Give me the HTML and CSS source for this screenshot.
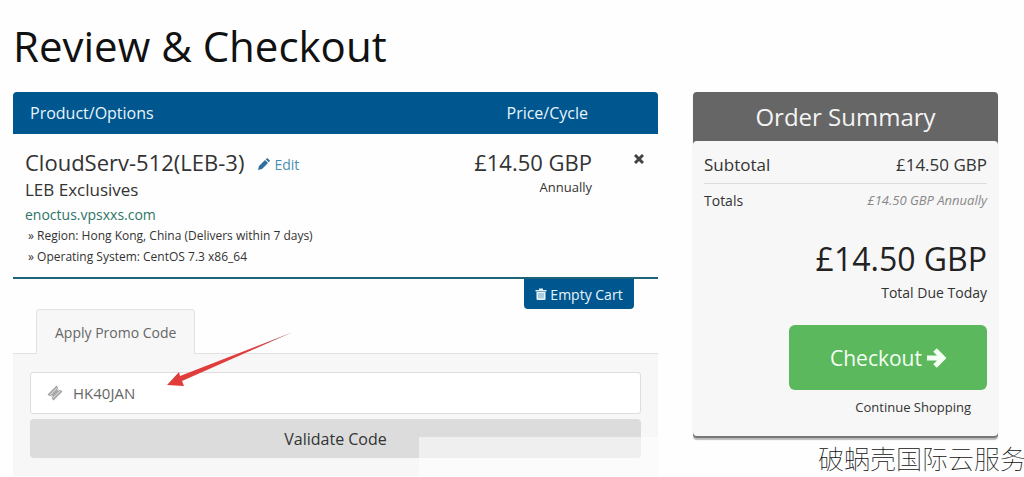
FILE: index.html
```html
<!DOCTYPE html>
<html lang="en">

<head>
    <meta charset="utf-8">
    <meta name="viewport" content="width=device-width, initial-scale=1.0">
    <title>Review &amp; Checkout</title>
    <link rel="stylesheet" href="styles.css">
</head>

<body>
    <h1>Review &amp; Checkout</h1>

    <div class="wrapper">
        <main>
            <div class="cart-header">
                <span>Product/Options</span>
                <span class="cart-header-price">Price/Cycle</span>
            </div>

            <section class="item">
                <div class="item-info">
                    <div class="item-title">
                        <h2>CloudServ-512(LEB-3)</h2>
                        <a class="edit" href="#">
                            <svg width="12" height="12" viewBox="0 0 12 12" aria-hidden="true">
                                <path fill="currentColor" d="M0 12l1-4 6-6 3 3-6 6zM7.700 1.300L8.600.4q.6-.5 1.200 0l1.800 1.800q.5.600 0 1.200l-.9.900z" />
                            </svg>
                            Edit
                        </a>
                    </div>
                    <p class="group">LEB Exclusives</p>
                    <p class="domain">enoctus.vpsxxs.com</p>
                    <ul class="options">
                        <li>» Region: Hong Kong, China (Delivers within 7 days)</li>
                        <li>» Operating System: CentOS 7.3 x86_64</li>
                    </ul>
                </div>
                <div class="item-price">
                    <p class="amount">£14.50 GBP</p>
                    <p class="cycle">Annually</p>
                </div>
                <button class="remove" type="button" aria-label="Remove">
                    <svg width="10" height="10" viewBox="0 0 10 10" aria-hidden="true">
                        <path stroke="currentColor" stroke-width="3" d="M1 1l8 8M9 1L1 9" />
                    </svg>
                </button>
            </section>

            <div class="empty">
                <button class="empty-cart" type="button">
                    <svg width="12" height="12" viewBox="0 0 12 12" aria-hidden="true">
                        <path fill="currentColor" d="M.5 2H4V.5h4V2h3.500v1.500H.5z" />
                        <path fill="currentColor" d="M1.500 4h9v7q0 1-1 1h-7q-1 0-1-1z" />
                        <path stroke="#00578f" stroke-width=".5" d="M4 5v5.500M6 5v5.500M8 5v5.500" />
                    </svg>
                    Empty Cart
                </button>
            </div>

            <div class="tabs">
                <button class="tab" type="button">Apply Promo Code</button>
            </div>
            <form class="promo">
                <div class="field">
                    <svg width="16" height="16" viewBox="0 0 16 16" aria-hidden="true">
                        <path fill="#aaa" d="M9.500.5L11 2q-.5 1.500.5 2.500t2.500.5l1.500 1.500-9 9L5 14q.5-1.500-.5-2.500T2 11L.5 9.500z" />
                        <path fill="none" stroke="#eee" stroke-width=".8" d="M9.500 3.500l3 3-6 6-3-3z" />
                    </svg>
                    <input type="text" name="code" value="HK40JAN" aria-label="Promo code">
                </div>
                <button class="validate" type="button">Validate Code</button>
                <svg class="arrow" width="126" height="54" viewBox="0 0 126 54" aria-hidden="true">
                    <defs>
                        <linearGradient id="fade" x1="0" x2="1">
                            <stop offset=".7" stop-color="#e03c3c" />
                            <stop offset="1" stop-color="#a87070" />
                        </linearGradient>
                    </defs>
                    <path fill="url(#fade)" d="M0 53l12-13 1 4L126 0 15 49l2 5z" />
                </svg>
            </form>
        </main>

        <aside>
            <h2>Order Summary</h2>
            <div class="summary">
                <div class="row subtotal">
                    <span>Subtotal</span>
                    <span>£14.50 GBP</span>
                </div>
                <div class="row totals">
                    <span>Totals</span>
                    <em>£14.50 GBP Annually</em>
                </div>
                <p class="due">£14.50 GBP</p>
                <p class="due-label">Total Due Today</p>
                <button class="checkout" type="button">
                    Checkout
                    <svg width="19" height="20" viewBox="0 0 19 20" aria-hidden="true">
                        <path fill="none" stroke="currentColor" stroke-width="5" d="M0 10h15M8 2l8 8-8 8" />
                    </svg>
                </button>
                <a class="continue" href="#">Continue Shopping</a>
            </div>
        </aside>
    </div>

    <div class="haze"></div>
    <p class="watermark">破蜗壳国际云服务</p>
</body>

</html>
```
FILE: styles.css
```css
* {
    box-sizing: border-box;
}

body {
    margin: 0;
    padding: 16px 26px 0 13px;
    background-color: #fefefe;
    color: #333;
    font-family: "Open Sans", sans-serif;
    font-size: 14px;
    overflow: hidden;
}

h1,
h2,
p,
ul {
    margin: 0;
    padding: 0;
    font-weight: 400;
}

h1 {
    color: #111;
    font-size: 42px;
    line-height: 60px;
    margin-bottom: 16px;
}

a {
    text-decoration: none;
}

button {
    border: 0;
    padding: 0;
    font-family: inherit;
    cursor: pointer;
}

.wrapper {
    display: grid;
    grid-template-columns: 645fr 305fr;
    grid-gap: 35px;
    align-items: start;
}

.cart-header {
    display: flex;
    justify-content: space-between;
    padding: 0 70px 0 17px;
    border-radius: 4px 4px 0 0;
    background-color: #00578f;
    color: #e8f4fb;
    font-size: 16px;
    line-height: 42px;
}

.item {
    display: flex;
    height: 145px;
    padding: 14px 14px 0 12px;
    border-bottom: 2px solid #1d6478;
}

.item-info {
    flex: 1;
}

.item-title {
    display: flex;
    align-items: center;
    gap: 14px;
}

.item-title h2,
.amount {
    font-size: 22px;
    line-height: 28px;
}

.edit {
    display: flex;
    align-items: center;
    gap: 4px;
    padding-top: 4px;
    color: #4a8fb8;
}

.edit svg {
    color: #2f6f9f;
}

.group {
    font-size: 17px;
    line-height: 28px;
}

.domain {
    color: #2f7468;
    line-height: 21px;
}

.options {
    padding-left: 3px;
    list-style: none;
    font-size: 12px;
    line-height: 21px;
}

.item-price {
    text-align: right;
}

.cycle {
    font-size: 13px;
    line-height: 22px;
}

.remove {
    align-self: flex-start;
    height: 22px;
    margin-left: 42px;
    background: none;
    color: #444;
}

.empty {
    display: flex;
    justify-content: flex-end;
    padding-right: 24px;
}

.empty-cart {
    display: flex;
    align-items: center;
    justify-content: center;
    gap: 3px;
    width: 110px;
    height: 30px;
    border-radius: 0 0 4px 4px;
    background-color: #00578f;
    color: #e8f4fb;
    font-size: 14px;
}

.tabs {
    padding-left: 23px;
}

.tab {
    display: block;
    position: relative;
    z-index: 1;
    height: 45px;
    margin-bottom: -1px;
    padding: 0 18px;
    border: 1px solid #e2e2e2;
    border-bottom: 0;
    border-radius: 4px 4px 0 0;
    background-color: #f7f7f7;
    color: #666;
    font-size: 14px;
}

.promo {
    position: relative;
    padding: 18px 17px;
    border-top: 1px solid #e2e2e2;
    background-color: #f7f7f7;
}

.field {
    display: flex;
    align-items: center;
    gap: 10px;
    height: 42px;
    padding-left: 16px;
    border: 1px solid #ddd;
    border-radius: 3px;
    background-color: #fff;
}

.field input {
    flex: 1;
    border: 0;
    padding: 0;
    background: none;
    color: #666;
    font-family: inherit;
    font-size: 15px;
    outline: none;
}

.validate {
    display: block;
    width: 100%;
    height: 39px;
    margin-top: 5px;
    border-radius: 4px;
    background-color: #dcdcdc;
    color: #333;
    font-size: 16px;
}

.arrow {
    position: absolute;
    left: 154px;
    top: -22px;
    z-index: 2;
}

aside {
    border-bottom: 2px solid #777;
    border-radius: 4px;
    background-color: #666;
    box-shadow: 0 2px 1px #bbb;
}

aside h2 {
    color: #f4f4f4;
    font-size: 24px;
    line-height: 49px;
    text-align: center;
}

.summary {
    display: flex;
    flex-direction: column;
    padding: 6px 11px 19px;
    border-radius: 4px;
    background-color: #f7f7f7;
}

.row {
    display: flex;
    justify-content: space-between;
}

.subtotal {
    border-bottom: 1px solid #ddd;
    font-size: 17px;
    line-height: 36px;
}

.totals {
    line-height: 33px;
}

.totals em {
    color: #888;
    font-size: 13px;
}

.due {
    margin-top: 17px;
    color: #222;
    font-size: 32px;
    line-height: 50px;
    text-align: right;
}

.due-label {
    line-height: 18px;
    text-align: right;
}

.checkout {
    display: flex;
    align-items: center;
    justify-content: center;
    align-self: flex-end;
    gap: 5px;
    width: 198px;
    height: 65px;
    margin-top: 23px;
    border-radius: 6px;
    background-color: #5cb85c;
    color: #f4fff4;
    font-size: 21px;
}

.continue {
    align-self: flex-end;
    padding: 7px 16px 0 0;
    color: #333;
    font-size: 13px;
    line-height: 20px;
}

/* pale box laid over the bottom right corner */
.haze {
    position: absolute;
    left: 419px;
    right: 366px;
    top: 437px;
    bottom: 0;
    z-index: 3;
    background-color: rgba(255, 255, 255, .55);
}

.watermark {
    position: absolute;
    right: -2px;
    bottom: 1px;
    z-index: 4;
    color: #111;
    font-family: "Noto Sans CJK SC", sans-serif;
    font-size: 26px;
    font-weight: 100;
    line-height: 36px;
}
```
